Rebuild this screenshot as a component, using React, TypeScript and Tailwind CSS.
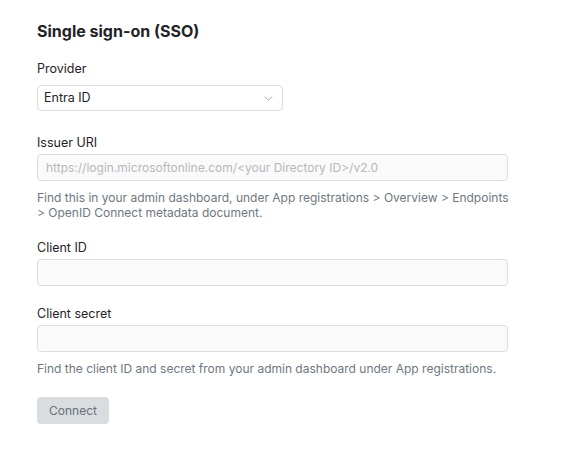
import React from 'react';

const Label: React.FC<{ children: React.ReactNode; className?: string }> = ({
  children,
  className = 'mb-px',
}) => (
  <label className={`block text-[12.5px] leading-5 text-[#1f2328] ${className}`}>
    {children}
  </label>
);

const Help: React.FC<{ children: React.ReactNode }> = ({ children }) => (
  <p className="mt-[9px] text-[12px] leading-[15px] text-[#6e7781]">{children}</p>
);

const TextInput: React.FC<{ placeholder?: string }> = ({ placeholder }) => (
  <input
    type="text"
    placeholder={placeholder}
    className="block w-[471px] h-[27px] rounded-[4px] border border-[#dcdfe2] bg-[#fafafa] px-[8px] text-[12px] text-[#1f2328] placeholder:text-[#b4b9be] outline-none"
  />
);

const App: React.FC = () => {
  return (
    <div
      className="min-h-screen bg-white pl-[37px] pt-[19px]"
      style={{ fontFamily: 'Inter, "Noto Sans", sans-serif' }}
    >
      <h1 className="text-[16px] leading-6 font-bold text-[#1f2328]">
        Single sign-on (SSO)
      </h1>

      <div className="mt-4">
        <Label className="mb-[6px]">Provider</Label>
        <div className="flex items-center justify-between w-[246px] h-[26px] rounded-[4px] border border-[#dcdfe2] bg-white pl-[6px] pr-[9px]">
          <span className="text-[12.5px] text-[#1f2328]">Entra ID</span>
          <svg width="9" height="5" viewBox="0 0 9 5" fill="none">
            <path
              d="M1 0.8l3.5 3.4 3.5-3.4"
              stroke="#a3a8ad"
              strokeWidth="1"
              strokeLinecap="round"
              strokeLinejoin="round"
            />
          </svg>
        </div>
      </div>

      <div className="mt-[22px]">
        <Label>Issuer URI</Label>
        <TextInput placeholder="https://login.microsoftonline.com/<your Directory ID>/v2.0" />
        <Help>
          Find this in your admin dashboard, under App registrations &gt; Overview &gt; Endpoints
          <br />
          &gt; OpenID Connect metadata document.
        </Help>
      </div>

      <div className="mt-[18px]">
        <Label>Client ID</Label>
        <TextInput />
      </div>

      <div className="mt-[18px]">
        <Label>Client secret</Label>
        <TextInput />
        <Help>
          Find the client ID and secret from your admin dashboard under App registrations.
        </Help>
      </div>

      <button
        type="button"
        disabled
        className="mt-[21px] h-[27px] w-[72px] rounded-[4px] bg-[#d9dde0] text-[12px] text-[#6b7178]"
      >
        Connect
      </button>
    </div>
  );
};

export default App;
